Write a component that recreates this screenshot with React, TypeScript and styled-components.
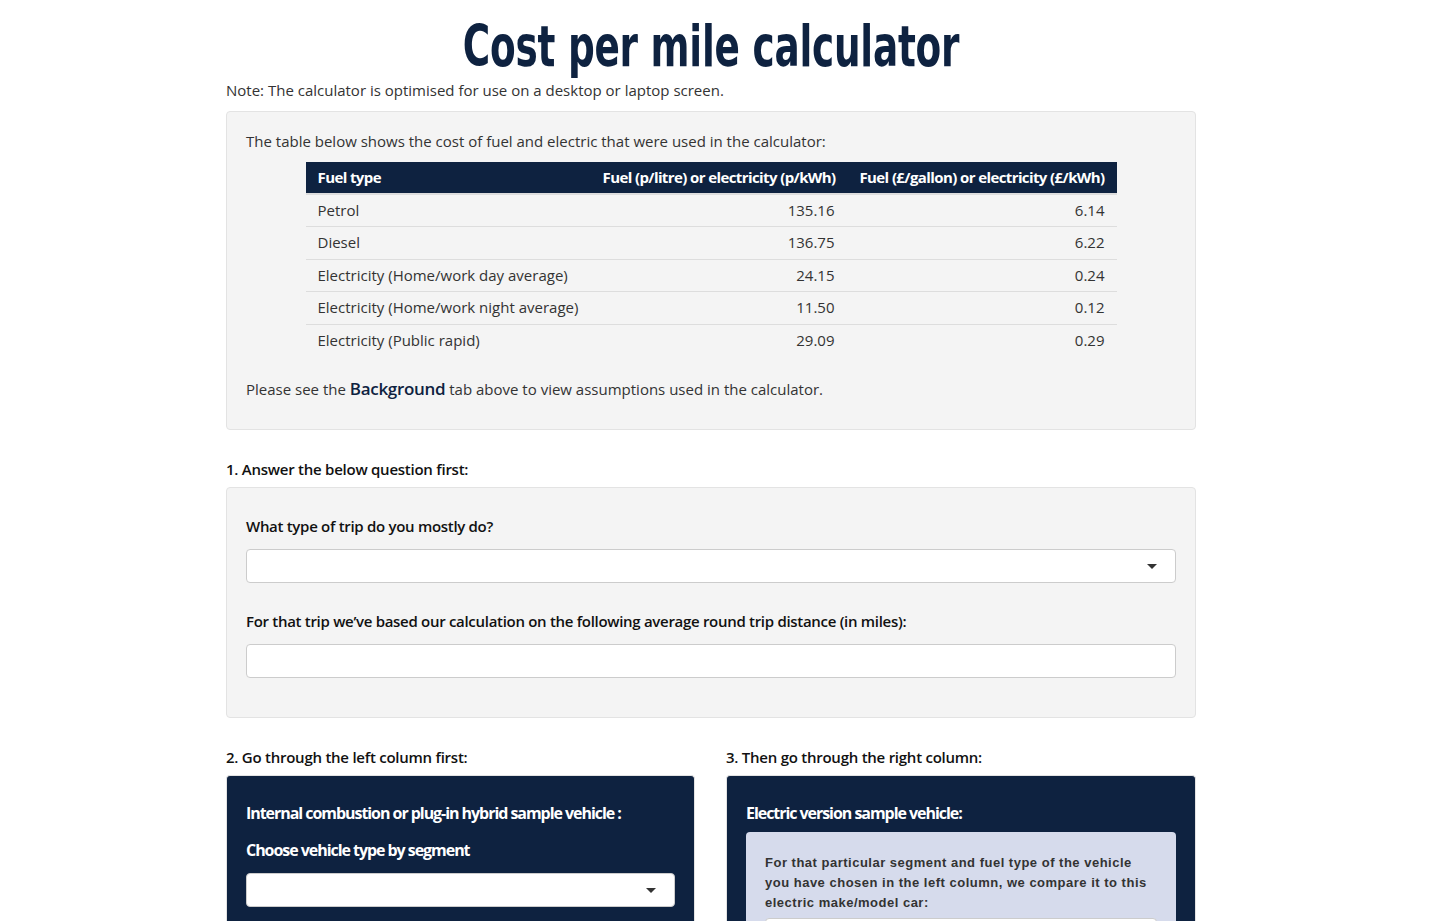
import React from "react";
import styled, { createGlobalStyle } from "styled-components";

const GlobalStyle = createGlobalStyle`
  html, body { margin: 0; padding: 0; background: #fff; }
  body {
    font-family: "Open Sans", "Liberation Sans", sans-serif;
    font-size: 15px;
    line-height: 1.42857;
    color: #333;
  }
  * { box-sizing: border-box; }
`;

const NAVY = "#0e2240";

const Page = styled.div`
  width: 970px;
  margin-left: 226px;
`;

const Title = styled.h1`
  margin: 14px 0 0;
  text-align: center;
  font-family: "Liberation Sans Narrow", "DejaVu Sans Condensed", sans-serif;
  font-weight: 700;
  font-size: 52px;
  line-height: 64px;
  color: ${NAVY};
  transform: scale(0.8, 1.1);
  letter-spacing: -0.3px;
`;

const Note = styled.p`
  margin: 2px 0 10px;
  line-height: 21px;
`;

const Well = styled.div`
  background: #f4f4f4;
  border: 1px solid #e3e3e3;
  border-radius: 4px;
  padding: 19px;
  margin-bottom: 20px;
`;

const Para = styled.p`
  margin: 0 0 10px;
  line-height: 21px;
`;

const Table = styled.table`
  width: 811px;
  margin: 0 auto 22px;
  border-collapse: collapse;
  table-layout: fixed;
`;

const Th = styled.th<{ $right?: boolean; $w: number }>`
  width: ${(p) => p.$w}px;
  background: ${NAVY};
  color: #fff;
  font-weight: 700;
  font-size: 15px;
  letter-spacing: -0.6px;
  text-align: ${(p) => (p.$right ? "right" : "left")};
  padding: 5px 12px;
  line-height: 21px;
  border-bottom: 2px solid #ddd;
  white-space: nowrap;
`;

const Td = styled.td<{ $right?: boolean }>`
  padding: 5px 12px;
  line-height: 1.42857;
  text-align: ${(p) => (p.$right ? "right" : "left")};
  border-top: 1px solid #ddd;
  color: #333;
  white-space: nowrap;
`;

const Strong = styled.span`
  font-weight: 600;
  font-size: 17px;
  color: ${NAVY};
  letter-spacing: -0.3px;
`;

const StepHeading = styled.div<{ $top?: number }>`
  font-weight: 600;
  color: #111;
  letter-spacing: -0.25px;
  line-height: 21px;
  margin: ${(p) => p.$top ?? 9}px 0 7px;
`;

const Label = styled.div`
  font-weight: 600;
  letter-spacing: -0.3px;
  line-height: 21px;
  color: #111;
  margin: 9px 0 12px;
`;

const FormGroup = styled.div`
  margin-bottom: 20px;
  &:not(:last-child) {
    margin-bottom: 28px;
  }
`;

const Field = styled.div`
  position: relative;
  height: 34px;
  background: #fff;
  border: 1px solid #ccc;
  border-radius: 4px;
`;

const Caret = styled.span`
  position: absolute;
  right: 18px;
  top: 14px;
  width: 0;
  height: 0;
  border-left: 5px solid transparent;
  border-right: 5px solid transparent;
  border-top: 5px solid #333;
`;

const Columns = styled.div`
  display: grid;
  grid-template-columns: 469px 470px;
  column-gap: 31px;
`;

const DarkPanel = styled.div`
  background: ${NAVY};
  border: 1px solid #e3e3e3;
  border-bottom: none;
  border-radius: 4px 4px 0 0;
  padding: 19px 19px 40px;
  min-height: 160px;
`;

const PanelTitle = styled.div`
  color: #fff;
  font-weight: 700;
  font-size: 16px;
  letter-spacing: -1.05px;
  line-height: 22px;
  margin: 7px 0 15px;
`;

const PanelLabel = styled.div`
  color: #fff;
  font-weight: 700;
  font-size: 16px;
  letter-spacing: -1.05px;
  line-height: 22px;
  margin: 0 0 12px;
`;

const InnerBox = styled.div`
  background: #d6dbec;
  border-radius: 4px;
  padding: 21px 19px 30px;
  margin-top: -7px;
`;

const InnerText = styled.p`
  margin: 0 0 5px;
  font-family: "Liberation Sans", Arial, sans-serif;
  font-weight: 700;
  font-size: 13px;
  line-height: 20px;
  color: #333;
  letter-spacing: 0.5px;
`;

const rows: [string, string, string][] = [
  ["Petrol", "135.16", "6.14"],
  ["Diesel", "136.75", "6.22"],
  ["Electricity (Home/work day average)", "24.15", "0.24"],
  ["Electricity (Home/work night average)", "11.50", "0.12"],
  ["Electricity (Public rapid)", "29.09", "0.29"],
];

export default function App() {
  return (
    <>
      <GlobalStyle />
      <Page>
        <Title>Cost per mile calculator</Title>
        <Note>Note: The calculator is optimised for use on a desktop or laptop screen.</Note>

        <Well>
          <Para>The table below shows the cost of fuel and electric that were used in the calculator:</Para>
          <Table>
            <thead>
              <tr>
                <Th $w={285}>Fuel type</Th>
                <Th $w={256} $right>Fuel (p/litre) or electricity (p/kWh)</Th>
                <Th $w={270} $right>Fuel (£/gallon) or electricity (£/kWh)</Th>
              </tr>
            </thead>
            <tbody>
              {rows.map((r) => (
                <tr key={r[0]}>
                  <Td>{r[0]}</Td>
                  <Td $right>{r[1]}</Td>
                  <Td $right>{r[2]}</Td>
                </tr>
              ))}
            </tbody>
          </Table>
          <Para>
            Please see the <Strong>Background</Strong> tab above to view assumptions used in the calculator.
          </Para>
        </Well>

        <StepHeading $top={29}>1. Answer the below question first:</StepHeading>
        <Well>
          <FormGroup>
            <Label>What type of trip do you mostly do?</Label>
            <Field>
              <Caret />
            </Field>
          </FormGroup>
          <FormGroup>
            <Label>For that trip we’ve based our calculation on the following average round trip distance (in miles):</Label>
            <Field />
          </FormGroup>
        </Well>

        <Columns>
          <div>
            <StepHeading>2. Go through the left column first:</StepHeading>
            <DarkPanel>
              <PanelTitle>Internal combustion or plug-in hybrid sample vehicle :</PanelTitle>
              <PanelLabel>Choose vehicle type by segment</PanelLabel>
              <Field>
                <Caret />
              </Field>
            </DarkPanel>
          </div>
          <div>
            <StepHeading>3. Then go through the right column:</StepHeading>
            <DarkPanel>
              <PanelTitle>Electric version sample vehicle:</PanelTitle>
              <InnerBox>
                <InnerText>
                  For that particular segment and fuel type of the vehicle you have chosen in the left column, we compare it to this electric make/model car:
                </InnerText>
                <Field />
              </InnerBox>
            </DarkPanel>
          </div>
        </Columns>
      </Page>
    </>
  );
}
